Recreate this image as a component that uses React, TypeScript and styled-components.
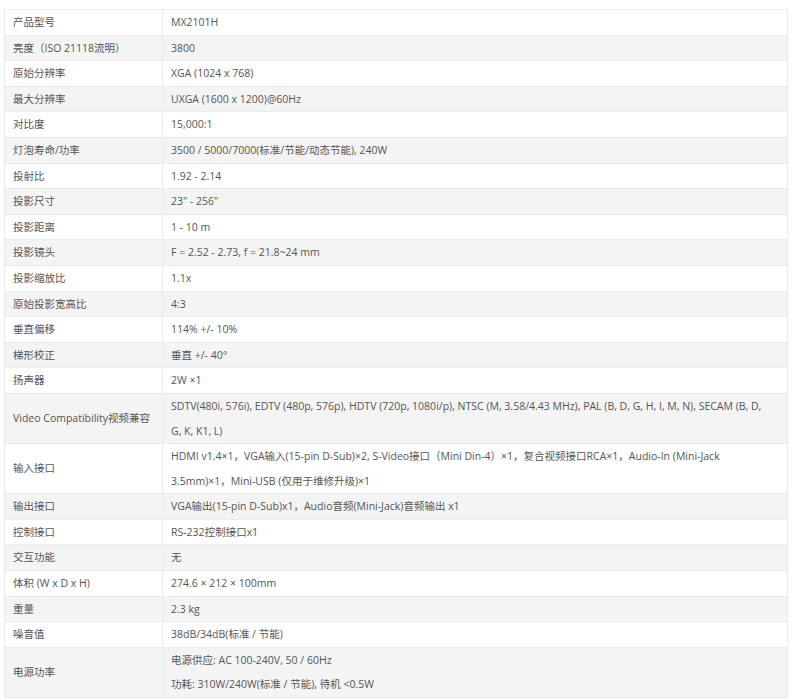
import React from "react";
import styled, { createGlobalStyle } from "styled-components";

const GlobalStyle = createGlobalStyle`
  html, body {
    margin: 0;
    padding: 0;
    background: #ffffff;
  }
  body {
    font-family: "Open Sans", "Noto Sans CJK SC", sans-serif;
  }
`;

const Page = styled.div`
  padding: 9px 2px 0 4px;
`;

const Table = styled.table`
  width: 100%;
  border-collapse: collapse;
  table-layout: fixed;
  font-family: "Open Sans", "Noto Sans CJK SC", sans-serif;
  font-size: 10.5px;
  color: #555555;
`;

const Row = styled.tr<{ $alt: boolean }>`
  background: ${(p) => (p.$alt ? "#f4f4f4" : "#ffffff")};
`;

const LabelCell = styled.td`
  box-sizing: border-box;
  width: 158px;
  border: 1px solid #ebebeb;
  padding: 0 4px 0 8px;
  line-height: 24.6px;
  vertical-align: middle;
`;

const ValueCell = styled.td`
  box-sizing: border-box;
  border: 1px solid #ebebeb;
  padding: 0 18px 0 8px;
  line-height: 24.6px;
  vertical-align: middle;
`;

const Line = styled.div`
  line-height: 24.6px;
`;

type Spec = { label: string; value: string | string[] };

const specs: Spec[] = [
  { label: "产品型号", value: "MX2101H" },
  { label: "亮度（ISO 21118流明）", value: "3800" },
  { label: "原始分辨率", value: "XGA (1024 x 768)" },
  { label: "最大分辨率", value: "UXGA (1600 x 1200)@60Hz" },
  { label: "对比度", value: "15,000:1" },
  { label: "灯泡寿命/功率", value: "3500 / 5000/7000(标准/节能/动态节能), 240W" },
  { label: "投射比", value: "1.92 - 2.14" },
  { label: "投影尺寸", value: "23\" - 256\"" },
  { label: "投影距离", value: "1 - 10 m" },
  { label: "投影镜头", value: "F = 2.52 - 2.73, f = 21.8~24 mm" },
  { label: "投影缩放比", value: "1.1x" },
  { label: "原始投影宽高比", value: "4:3" },
  { label: "垂直偏移", value: "114% +/- 10%" },
  { label: "梯形校正", value: "垂直 +/- 40°" },
  { label: "扬声器", value: "2W ×1" },
  {
    label: "Video Compatibility视频兼容",
    value:
      "SDTV(480i, 576i), EDTV (480p, 576p), HDTV (720p, 1080i/p), NTSC (M, 3.58/4.43 MHz), PAL (B, D, G, H, I, M, N), SECAM (B, D, G, K, K1, L)",
  },
  {
    label: "输入接口",
    value:
      "HDMI v1.4×1，VGA输入(15-pin D-Sub)×2, S-Video接口（Mini Din-4）×1，复合视频接口RCA×1，Audio-In (Mini-Jack 3.5mm)×1，Mini-USB (仅用于维修升级)×1",
  },
  { label: "输出接口", value: "VGA输出(15-pin D-Sub)x1，Audio音频(Mini-Jack)音频输出 x1" },
  { label: "控制接口", value: "RS-232控制接口x1" },
  { label: "交互功能", value: "无" },
  { label: "体积 (W x D x H)", value: "274.6 × 212 × 100mm" },
  { label: "重量", value: "2.3 kg" },
  { label: "噪音值", value: "38dB/34dB(标准 / 节能)" },
  {
    label: "电源功率",
    value: ["电源供应: AC 100-240V, 50 / 60Hz", "功耗: 310W/240W(标准 / 节能), 待机 <0.5W"],
  },
];

export default function App() {
  return (
    <>
      <GlobalStyle />
      <Page>
        <Table>
          <tbody>
            {specs.map((s, i) => (
              <Row key={s.label} $alt={i % 2 === 1}>
                <LabelCell>{s.label}</LabelCell>
                <ValueCell>
                  {Array.isArray(s.value)
                    ? s.value.map((l) => <Line key={l}>{l}</Line>)
                    : s.value}
                </ValueCell>
              </Row>
            ))}
          </tbody>
        </Table>
      </Page>
    </>
  );
}
